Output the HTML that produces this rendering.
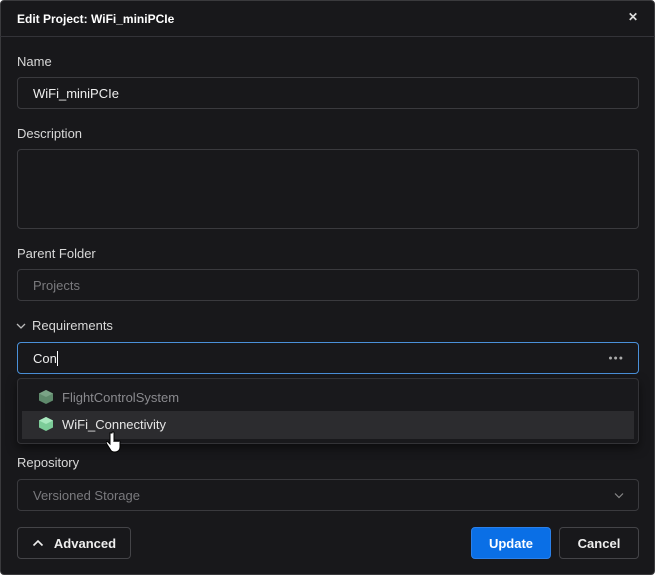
<!DOCTYPE html>
<html><head><style>
*{box-sizing:border-box;margin:0;padding:0}
body{width:656px;height:576px;background:#fff;font-family:"Liberation Sans",sans-serif;font-size:13px;overflow:hidden;position:relative}
.dlg{position:absolute;left:0;top:0;width:655px;height:575px;background:#18181b;border:1px solid #3a3a3d;border-radius:4px}
.hdr{position:absolute;left:-1px;top:-1px;right:-1px;height:37px;border-bottom:1px solid #333338;color:#fff;font-weight:bold;font-size:12px;padding:12px 17px}
.x{position:absolute;right:17px;top:10px;color:#ddd;font-size:12px;font-weight:bold}
.lbl{position:absolute;left:16px;color:#d8d8d8;font-size:13px}
.in{position:absolute;left:16px;width:622px;border:1px solid #3a3a3e;border-radius:4px;background:#18181b;color:#eee;padding:0 15px;display:flex;align-items:center}
.ph{color:#7a7a7e}
.btn{position:absolute;top:526px;height:32px;border-radius:4px;display:flex;align-items:center;justify-content:center;font-weight:bold;color:#eee}
</style></head><body>
<div class="dlg">
<div class="hdr">Edit Project: WiFi_miniPCIe<span class="x">✕</span></div>
<div class="lbl" style="top:53px">Name</div>
<div class="in" style="top:76px;height:32px">WiFi_miniPCIe</div>
<div class="lbl" style="top:125px">Description</div>
<div class="in" style="top:148px;height:80px"></div>
<div class="lbl" style="top:245px">Parent Folder</div>
<div class="in ph" style="top:268px;height:32px">Projects</div>
<div class="lbl" style="top:317px;left:15px"><svg width="10" height="8" style="margin-right:6px" viewBox="0 0 10 8"><path d="M1 2l4 4 4-4" stroke="#bbb" fill="none" stroke-width="1.3"/></svg>Requirements</div>
<div class="in" style="top:341px;height:32px;border-color:#4a90d9">Con<span style="display:inline-block;width:1px;height:15px;background:#fff"></span><span style="position:absolute;right:14px;color:#aaa;font-size:7px;letter-spacing:1px">●●●</span></div>
<div style="position:absolute;left:16px;top:377px;width:622px;height:66px;border:1px solid #333337;border-radius:4px;background:#19191c;box-shadow:0 4px 10px rgba(0,0,0,.5)">
<div style="position:absolute;left:20px;top:10px;color:#8a8a8e;display:flex;align-items:center"><svg width="16" height="16" viewBox="0 0 16 16" style="margin-right:8px"><path d="M8 1l7 3.5v7L8 15 1 11.5v-7z" fill="#5f8a6c"/><path d="M1 4.5L8 8l7-3.5L8 1z" fill="#7aa386"/></svg>FlightControlSystem</div>
<div style="position:absolute;left:4px;top:32px;width:612px;height:28px;background:#2c2c2f"></div>
<div style="position:absolute;left:20px;top:37px;color:#e5e5e5;display:flex;align-items:center"><svg width="16" height="16" viewBox="0 0 16 16" style="margin-right:8px"><path d="M8 1l7 3.5v7L8 15 1 11.5v-7z" fill="#7ccc98"/><path d="M1 4.5L8 8l7-3.5L8 1z" fill="#a8e8be"/></svg>WiFi_Connectivity</div>
<svg style="position:absolute;left:88px;top:52px" width="16" height="22" viewBox="0 0 16 22"><path d="M4 2v11l-2-2c-1-1-2.5 0-1.5 1.5L4 18c1 2 2 3 5 3s5-2 5-5v-5c0-1.5-2-1.5-2 0 0-1.5-2-1.5-2 0 0-1.5-2-1.5-2 0V2c0-1.5-2-1.5-2 0z" fill="#fff" stroke="#000" stroke-width="1"/></svg>
</div>
<div class="lbl" style="top:454px">Repository</div>
<div class="in ph" style="top:478px;height:32px">Versioned Storage<svg style="position:absolute;right:14px" width="10" height="7" viewBox="0 0 10 7"><path d="M1 1.5l4 4 4-4" stroke="#888" fill="none" stroke-width="1.2"/></svg></div>
<div class="btn" style="left:16px;width:114px;border:1px solid #444448"><svg width="12" height="8" viewBox="0 0 12 8" style="margin-right:10px"><path d="M1.5 6.5l4.5-4.5 4.5 4.5" stroke="#eee" fill="none" stroke-width="1.6"/></svg>Advanced</div>
<div class="btn" style="left:470px;width:80px;background:#0a6fe6;border:1px solid #2a80ea;color:#fff">Update</div>
<div class="btn" style="left:558px;width:80px;border:1px solid #444448">Cancel</div>
</div>
</body></html>
